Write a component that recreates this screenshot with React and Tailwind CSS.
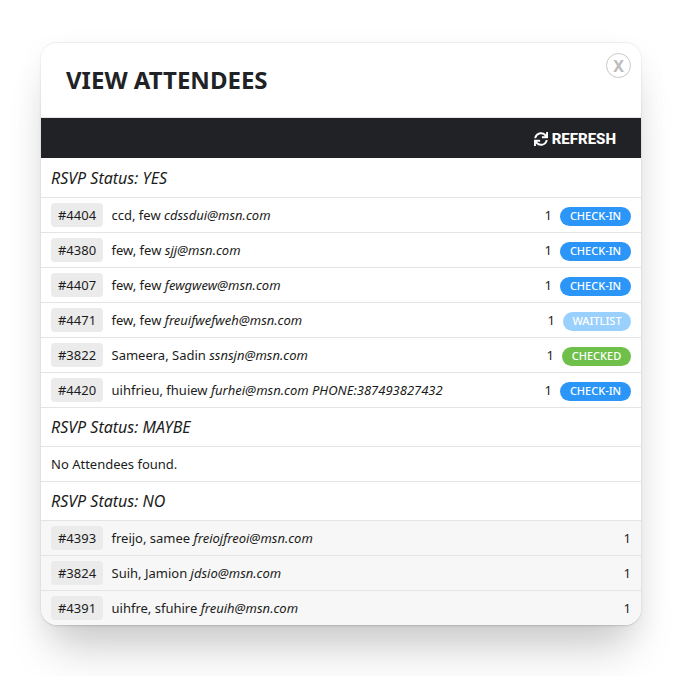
import { FaSync } from 'react-icons/fa';

const yes = [
  { id: '#4404', name: 'ccd, few', email: 'cdssdui@msn.com', status: 'checkin' },
  { id: '#4380', name: 'few, few', email: 'sjj@msn.com', status: 'checkin' },
  { id: '#4407', name: 'few, few', email: 'fewgwew@msn.com', status: 'checkin' },
  { id: '#4471', name: 'few, few', email: 'freuifwefweh@msn.com', status: 'waitlist' },
  { id: '#3822', name: 'Sameera, Sadin', email: 'ssnsjn@msn.com', status: 'checked' },
  { id: '#4420', name: 'uihfrieu, fhuiew', email: 'furhei@msn.com PHONE:387493827432', status: 'checkin' },
];

const no = [
  { id: '#4393', name: 'freijo, samee', email: 'freiojfreoi@msn.com' },
  { id: '#3824', name: 'Suih, Jamion', email: 'jdsio@msn.com' },
  { id: '#4391', name: 'uihfre, sfuhire', email: 'freuih@msn.com' },
];

function StatusPill({ status }) {
  if (status === 'waitlist') {
    return <span className="ml-[8px] mt-[2px] flex h-[19px] w-[68px] items-center justify-center rounded-full bg-[#99d0fd] text-[11px] font-medium text-white">WAITLIST</span>;
  }
  if (status === 'checked') {
    return <span className="ml-[8px] mt-[2px] flex h-[19px] w-[69px] items-center justify-center rounded-full bg-[#6fc04b] text-[11px] font-medium text-white">CHECKED</span>;
  }
  return <span className="ml-[8px] mt-[2px] flex h-[19px] w-[71px] items-center justify-center rounded-full bg-[#2b96f8] text-[11px] font-medium text-white">CHECK-IN</span>;
}

function Row({ row, muted }) {
  return (
    <div className={`flex h-[35px] items-center border-t border-[#e4e4e4] px-[10px] text-[13px] text-[#1b1c20] ${muted ? 'bg-[#f7f7f7]' : 'bg-white'}`}>
      <span className="flex h-6 w-[52px] items-center justify-center rounded-[4px] bg-[#ebebeb] pt-px">{row.id}</span>
      <span className="ml-[8.5px] flex-1 pt-px">
        {row.name} <em>{row.email}</em>
      </span>
      <span className="pt-px">1</span>
      {row.status && <StatusPill status={row.status} />}
    </div>
  );
}

function SectionTitle({ children }) {
  return (
    <div className="flex h-[39px] items-center border-t border-[#e4e4e4] pl-[10px] text-[16px] italic text-[#1b1c20]">
      {children}
    </div>
  );
}

export default function App() {
  return (
    <div className="h-[676px] bg-white pt-[42px] font-['Noto_Sans',sans-serif]">
      <div className="relative ml-[41px] w-[600px] overflow-hidden rounded-[16px] border-t border-[#eeeeee] bg-white shadow-[0_35px_45px_-12px_rgba(0,0,0,0.18),0_10px_30px_rgba(0,0,0,0.06),0_1px_2px_rgba(0,0,0,0.15)]">
        <button className="absolute right-[10px] top-[10px] flex h-[25px] w-[25px] items-center justify-center rounded-full border border-[#c8c8c8] text-[16px] font-bold text-[#bdbdbd]">
          X
        </button>

        <div className="flex h-[74px] items-center pl-[25px]">
          <h1 className="text-[24px] font-bold text-[#212226]">VIEW ATTENDEES</h1>
        </div>

        <div className="flex h-[41px] items-center justify-end border-t border-[#e4e4e4] bg-[#212226] pr-[25px] pt-[2px] font-['Roboto',sans-serif] text-[15px] font-extrabold text-white">
          <FaSync size={14} className="mr-[4px]" />
          REFRESH
        </div>

        <div className="flex h-[39px] items-center pl-[10px] text-[16px] italic text-[#1b1c20]">RSVP Status: YES</div>
        {yes.map((row) => (
          <Row key={row.id} row={row} />
        ))}

        <SectionTitle>RSVP Status: MAYBE</SectionTitle>
        <div className="flex h-[35px] items-center border-t border-[#e4e4e4] pl-[10px] pt-px text-[13px] text-[#1b1c20]">No Attendees found.</div>

        <SectionTitle>RSVP Status: NO</SectionTitle>
        {no.map((row) => (
          <Row key={row.id} row={row} muted />
        ))}
      </div>
    </div>
  );
}
